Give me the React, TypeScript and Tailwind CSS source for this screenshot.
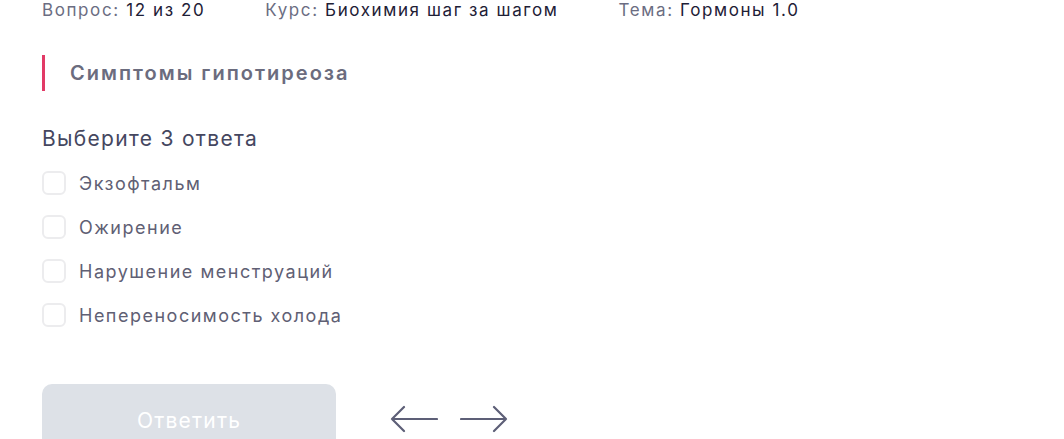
import React from "react";

const answers = ["Экзофтальм", "Ожирение", "Нарушение менструаций", "Непереносимость холода"];

const Meta = ({ label, value }: { label: string; value: string }) => (
  <div className="text-[17px] leading-[22px] tracking-[1.6px]">
    <span className="text-[#6b6d82]">{label}: </span>
    <span className="text-[#1e2036]">{value}</span>
  </div>
);

export default function App() {
  return (
    <div
      className="w-[1064px] h-[439px] overflow-hidden bg-white pl-[42px]"
      style={{ fontFamily: "Inter, 'Noto Sans', sans-serif" }}
    >
      {/* Meta row */}
      <div className="flex gap-[60px] -mt-[1px]">
        <Meta label="Вопрос" value="12 из 20" />
        <Meta label="Курс" value="Биохимия шаг за шагом" />
        <Meta label="Тема" value="Гормоны 1.0" />
      </div>

      {/* Question title */}
      <div className="mt-[34px] flex items-center h-[36px] border-l-[3px] border-[#e23a66] pl-[25px]">
        <h2 className="text-[20px] font-semibold tracking-[2px] text-[#6b6c7e]">Симптомы гипотиреоза</h2>
      </div>

      <p className="mt-[34px] text-[21px] leading-[28px] tracking-[1.3px] text-[#45475f]">Выберите 3 ответа</p>

      <ul className="mt-[18px] flex flex-col gap-[20px]">
        {answers.map((a) => (
          <li key={a} className="flex items-center gap-[13px] h-[24px]">
            <span className="w-[24px] h-[24px] rounded-[6px] border-2 border-[#ececee] bg-white shrink-0" />
            <span className="text-[18px] text-[#5f6074] tracking-[1.5px]">{a}</span>
          </li>
        ))}
      </ul>

      <div className="mt-[57px] flex items-start gap-[54px]">
        <button className="w-[294px] h-[72px] rounded-[10px] bg-[#dde1e7] text-white text-[21px] tracking-[1.2px] pt-[2px]">
          Ответить
        </button>
        <div className="flex gap-[22px] pt-[21px]">
          <svg width="48" height="28" viewBox="0 0 48 28" fill="none" stroke="#5d5f77" strokeWidth="2.2" strokeLinecap="round" strokeLinejoin="round">
            <path d="M47 14H2M14 2L2 14l12 12" />
          </svg>
          <svg width="48" height="28" viewBox="0 0 48 28" fill="none" stroke="#5d5f77" strokeWidth="2.2" strokeLinecap="round" strokeLinejoin="round">
            <path d="M1 14h45M34 2l12 12-12 12" />
          </svg>
        </div>
      </div>
    </div>
  );
}
